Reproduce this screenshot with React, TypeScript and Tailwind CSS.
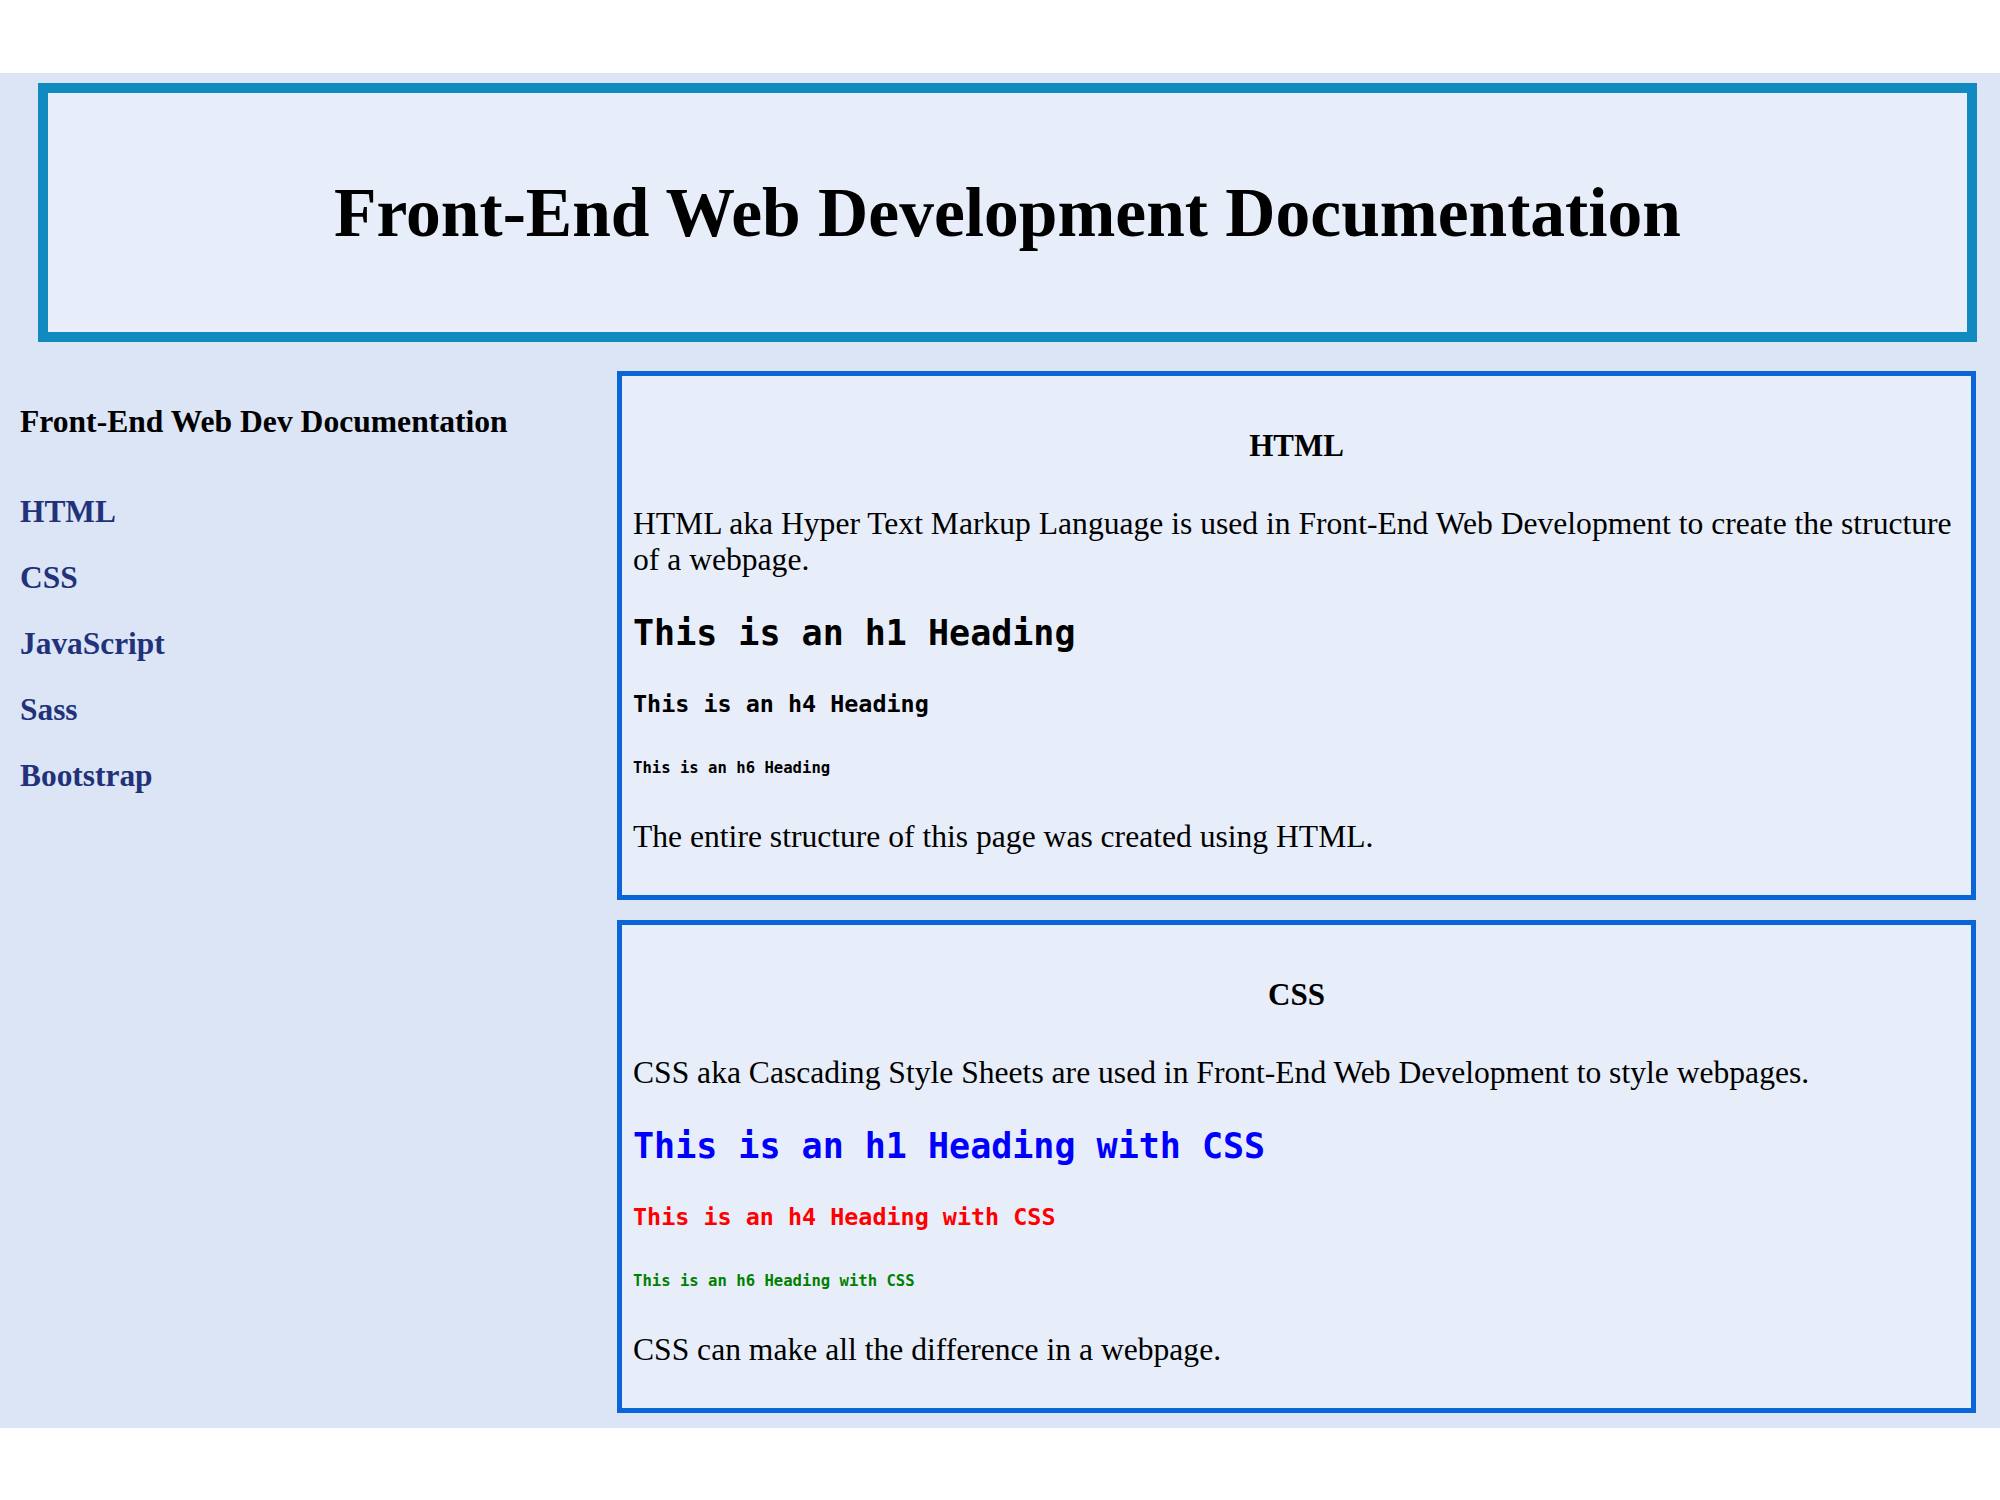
const sections = [
  {
    title: "HTML",
    intro:
      "HTML aka Hyper Text Markup Language is used in Front-End Web Development to create the structure of a webpage.",
    h1: "This is an h1 Heading",
    h4: "This is an h4 Heading",
    h6: "This is an h6 Heading",
    outro: "The entire structure of this page was created using HTML.",
    colors: ["text-black", "text-black", "text-black"],
  },
  {
    title: "CSS",
    intro:
      "CSS aka Cascading Style Sheets are used in Front-End Web Development to style webpages.",
    h1: "This is an h1 Heading with CSS",
    h4: "This is an h4 Heading with CSS",
    h6: "This is an h6 Heading with CSS",
    outro: "CSS can make all the difference in a webpage.",
    colors: ["text-[#0000ff]", "text-[#ff0000]", "text-[#008000]"],
  },
];

const links = ["HTML", "CSS", "JavaScript", "Sass", "Bootstrap"];

export default function App() {
  return (
    <div className="min-h-screen bg-white font-['Liberation_Serif',serif] text-black">
      <div className="h-[73px]" />
      <div className="bg-[#dce5f5] h-[1355px] pt-[10px]">
        <header className="ml-[38px] mr-[23px] h-[259px] border-[10px] border-[#118abf] bg-[#e8eef9] flex items-center justify-center">
          <h1 className="font-bold text-[69.5px] leading-none">
            Front-End Web Development Documentation
          </h1>
        </header>

        <div className="flex mt-[29px]">
          <nav className="w-[617px] pl-[20px] pt-[33px]">
            <p className="font-bold text-[31.6px] leading-[36px]">
              Front-End Web Dev Documentation
            </p>
            <ul className="mt-[54px] flex flex-col gap-[30px]">
              {links.map((l) => (
                <li key={l}>
                  <a href="#" className="font-bold text-[31.4px] leading-[36px] text-[#22327a]">
                    {l}
                  </a>
                </li>
              ))}
            </ul>
          </nav>

          <main className="w-[1359px] flex flex-col gap-[20px]">
            {sections.map((s) => (
              <section
                key={s.title}
                className="border-[5px] border-[#0a66d6] bg-[#e8eef9] pl-[11px] pr-[11px] pt-[52px] pb-[40px]"
              >
                <h2 className="text-center font-bold text-[31px] leading-[36px]">{s.title}</h2>
                <p className="mt-[42px] text-[31.6px] leading-[36px]">{s.intro}</p>
                <div className="font-['DejaVu_Sans_Mono',monospace] font-bold">
                  <h3 className={`mt-[34px] text-[35px] leading-[42px] ${s.colors[0]}`}>{s.h1}</h3>
                  <h4 className={`mt-[36px] text-[23.4px] leading-[28px] ${s.colors[1]}`}>{s.h4}</h4>
                  <h6 className={`mt-[40px] text-[15.6px] leading-[20px] ${s.colors[2]}`}>{s.h6}</h6>
                </div>
                <p className="mt-[41px] text-[31.6px] leading-[36px]">{s.outro}</p>
              </section>
            ))}
          </main>
        </div>
      </div>
    </div>
  );
}
